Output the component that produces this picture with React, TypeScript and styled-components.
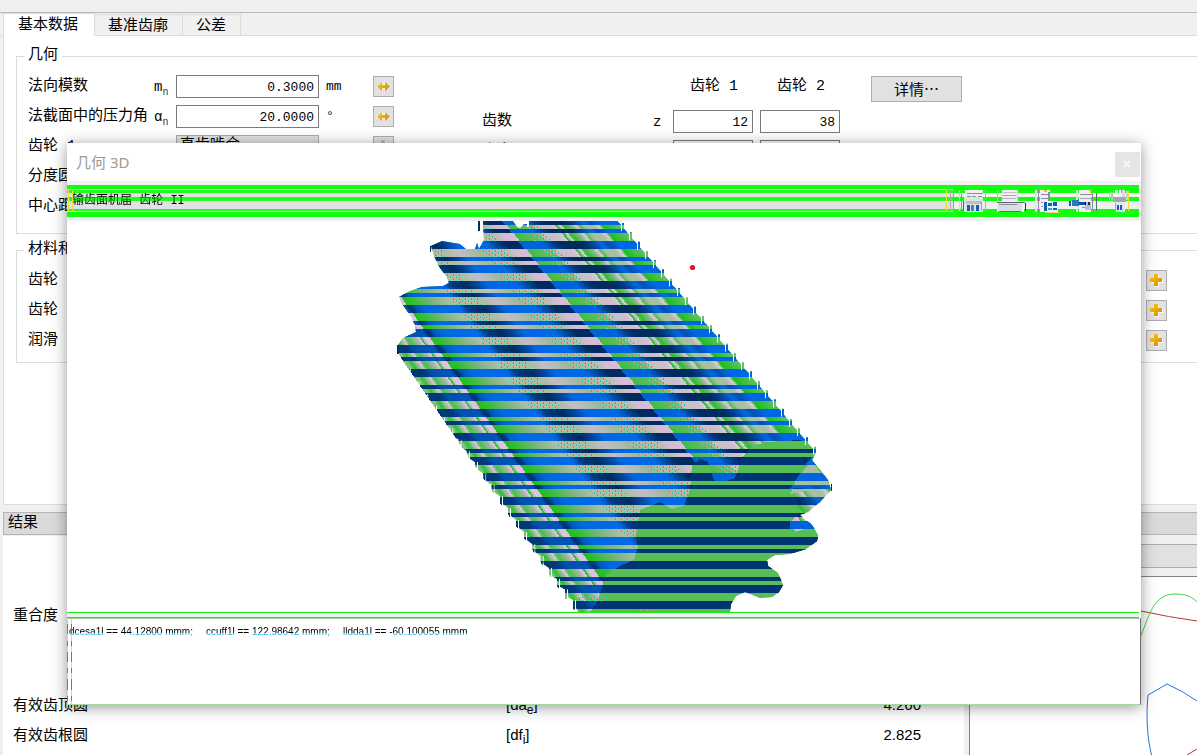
import React from "react";
import styled, { createGlobalStyle } from "styled-components";

const UI = `"Liberation Sans", "Noto Sans CJK SC", sans-serif`;
const MONO = `"Liberation Mono", "Noto Sans CJK SC", monospace`;

const GlobalStyle = createGlobalStyle`
  *, *::before, *::after { box-sizing: border-box; }
  html, body { margin: 0; padding: 0; height: 100%; overflow: hidden; }
  body { background: #f0f0f0; color: #000; font: 15px/20px ${MONO}; }
  #root { height: 100%; }
`;

/* ---------- main form ---------- */

const Desktop = styled.div`
  position: relative;
  min-height: 100vh;
  display: flex;
  flex-direction: column;
`;
const TopStrip = styled.header`
  height: 13px;
  border-bottom: 1px solid #b9b9b9;
`;
const TabBar = styled.nav`
  display: flex;
  align-items: flex-end;
  height: 23px;
  padding-left: 3px;
  border-bottom: 1px solid #dcdcdc;
`;
const Tab = styled.button<{ $active?: boolean }>`
  height: ${(p) => (p.$active ? 23 : 21)}px;
  margin: ${(p) => (p.$active ? "0 0 -1px" : "0")};
  padding: ${(p) => (p.$active ? "2px 16px 0 14px" : "2px 14px 0 13px")};
  border: 1px solid #dcdcdc;
  border-width: ${(p) => (p.$active ? "1px 1px 0 1px" : "1px 1px 0 0")};
  background: ${(p) => (p.$active ? "#fff" : "#f0f0f0")};
  color: #000;
  font: 15px/20px ${MONO};
`;
const Panel = styled.main`
  height: 469px;
  margin-left: 3px;
  padding: 10px 0 0 12px;
  background: #fff;
  border: 1px solid #dcdcdc;
  border-width: 0 0 1px 1px;
`;
const Group = styled.fieldset<{ $size: number }>`
  display: flex;
  height: ${(p) => p.$size}px;
  min-width: 0;
  margin: 0 0 6px;
  padding: 5px 0 0 11px;
  border: 1px solid #dcdcdc;
  border-right: 0;
`;
const Legend = styled.legend`
  margin-left: -4px;
  padding: 0 4px;
  line-height: 20px;
`;
const Column = styled.div`
  width: 454px;
  flex: none;
`;
const GearColumn = styled.div`
  flex: 1;
`;
const Row = styled.div`
  display: flex;
  align-items: center;
  height: 30px;
`;
const RowLabel = styled.label<{ $w: number }>`
  width: ${(p) => p.$w}px;
  flex: none;
  padding-top: 2px;
  white-space: nowrap;
`;
const Sym = styled.span<{ $w: number }>`
  width: ${(p) => p.$w}px;
  flex: none;
  padding-top: 2px;
  font-size: 14px;
  sub { font-size: 10px; line-height: 0; color: #245; }
`;
const Field = styled.input<{ $w: number }>`
  width: ${(p) => p.$w}px;
  height: 23px;
  flex: none;
  margin-right: 7px;
  padding: 2px 4px 0;
  border: 1px solid #7a7a7a;
  background: #fff;
  text-align: right;
  font: 13px/20px ${MONO};
`;
const Choice = styled.select`
  width: 143px;
  height: 23px;
  margin-right: 7px;
  padding: 0 3px;
  appearance: none;
  border: 1px solid #adadad;
  border-radius: 0;
  background: #e1e1e1;
  color: #000;
  font: 15px/20px ${MONO};
`;
const Unit = styled.span`
  width: 47px;
  padding-top: 2px;
  font-size: 13px;
`;
const IconButton = styled.button`
  display: flex;
  align-items: center;
  justify-content: center;
  width: 21px;
  height: 21px;
  padding: 0;
  border: 1px solid #adadad;
  background: #e1e1e1;
`;
const HeadRow = styled.div`
  display: flex;
  height: 35px;
  padding-left: 208px;
  line-height: 32px;
`;
const HeadCell = styled.span`
  width: 87px;
`;
const DetailButton = styled.button`
  width: 91px;
  height: 26px;
  margin: 5px 0 0 7px;
  padding: 0;
  border: 1px solid #adadad;
  background: #e1e1e1;
  font: 15px/20px "Noto Sans CJK SC", sans-serif;
`;
const MaterialRow = styled(Row)`
  justify-content: space-between;
  padding-right: 30px;
`;
const MaterialName = styled.span`
  padding-top: 2px;
`;
const MaterialRows = styled.div`
  flex: 1;
`;

/* ---------- results ---------- */

const Lower = styled.section`
  display: flex;
  flex: 1;
  padding: 7px 0 0 3px;
`;
const Results = styled.div`
  display: flex;
  flex-direction: column;
  flex: 1;
`;
const DockTitle = styled.h2`
  height: 23px;
  margin: 0 0 1px;
  padding-left: 4px;
  border: 1px solid #b4b4b4;
  border-right: 0;
  background: #dadada;
  font: 15px/22px ${MONO};
`;
const ResultBody = styled.div`
  flex: 1;
  padding: 64px 43px 0 10px;
  background: #fff;
`;
const ResultTable = styled.table`
  width: 100%;
  border-collapse: collapse;
  table-layout: fixed;
  font-family: ${UI};
  td, th { height: 30px; padding: 0; font-weight: 400; text-align: left; vertical-align: middle; }
  th { width: 493px; }
  tr:first-child > * { height: 90px; padding-bottom: 60px; }
  td:last-child { text-align: right; }
  sub { font-size: 12px; line-height: 0; }
`;
const ChartDock = styled.div`
  display: flex;
  flex-direction: column;
  width: 228px;
  margin-left: 5px;
`;
const ChartBar = styled.div`
  height: 24px;
  margin: 8px 0;
  border: 1px solid #adadad;
  border-right: 0;
  background: #e1e1e1;
`;
const ChartArea = styled.div`
  flex: 1;
  border: 1px solid #828282;
  border-width: 1px 0 0 1px;
  background: #fff;
  svg { display: block; }
`;

/* ---------- 3D window ---------- */

const Win = styled.section`
  position: absolute;
  top: 143px;
  left: 67px;
  right: 56px;
  background: #fff;
  box-shadow: 0 2px 14px rgba(0, 0, 0, 0.42);
`;
const TitleBar = styled.div`
  display: flex;
  align-items: center;
  justify-content: space-between;
  height: 38px;
  padding: 4px 1px 0 9px;
`;
const WinTitle = styled.h1`
  margin: 0;
  padding-bottom: 4px;
  color: #999;
  font: 15px/20px "Noto Sans", "Noto Sans CJK SC", sans-serif;
`;
const CloseButton = styled.button`
  display: flex;
  align-items: center;
  justify-content: center;
  width: 25px;
  height: 25px;
  padding: 0;
  border: 0;
  background: #e5e5e5;
`;
const Toolbar = styled.div`
  padding: 4px 2px 4px 0;
  background: #f0f0f0;
`;
const ToolStrip = styled.div`
  display: flex;
  height: 32px;
  background: linear-gradient(#10ff10 8px, #f0f0f0 8px 12px, #10ff10 12px 16px, #f0f0f0 16px 24px, #10ff10 24px);
`;
const ToolLabel = styled.div`
  position: relative;
  flex: 1;
  padding-left: 5px;
  border-right: 1px solid #a0b030;
  background: linear-gradient(
    #10ff10 4px, #c8ffc8 4px 5px, #20ff20 5px 8px, #e1e1e1 8px 12px, #20ff20 12px 16px,
    #e1e1e1 16px 24px, #20ff20 24px 26px, #c8ffc8 26px 27px, #10ff10 27px
  );
  font: 12px/32px ${MONO};
  white-space: pre;
  &::before {
    content: "";
    position: absolute;
    inset: 4px auto 5px 1px;
    width: 5px;
    border: 1px solid #e8e040;
  }
  &::after {
    content: "";
    position: absolute;
    inset: 4px 2px 5px auto;
    width: 5px;
    border: 1px solid #e8e040;
    border-right-color: #b0b0b0;
  }
`;
const ToolName = styled.span`
  background: linear-gradient(#000 12px, #0a6a0a 12px 16px, #000 16px);
  background-clip: text;
  color: transparent;
  display: inline-block;
  height: 32px;
`;
const ToolButton = styled.button`
  width: 37px;
  height: 32px;
  padding: 0;
  border: 0;
  background: none;
  svg { display: block; }
`;
const View = styled.div`
  height: 391px;
  overflow: hidden;
  svg { display: block; width: 100%; height: 391px; }
`;
const Splitter = styled.div`
  height: 6px;
  border: solid #14f014;
  border-width: 1px 0;
  background: #f0f0f0;
  margin-right: 2px;
`;
const Log = styled.output`
  display: flex;
  position: relative;
  gap: 9px;
  height: 87px;
  padding: 5px 0 0 1px;
  border: 1px solid #808080;
  border-color: #a0d0a0 #707070 #a0dca0 transparent;
  font: 10px/16px ${UI};
  white-space: pre;
  &::before {
    content: "";
    position: absolute;
    inset: 0 auto 0 -1px;
    width: 5px;
    border: 1px solid;
    border-width: 0 1px;
    border-image: repeating-linear-gradient(#a8dcff 0 6px, #777 6px 16px, #a8dcff 16px 22px, #777 22px 27px) 1;
  }
`;
const LogItem = styled.span`
  width: 128px;
  height: 16px;
  background: linear-gradient(#000 9px, #12b4f0 9px 11px, #28b428 11px 12px, #e8e020 12px);
  background-clip: text;
  color: transparent;
`;

/* ---------- drawings ---------- */

const Swap = () => (
  <svg width="15" height="13" viewBox="0 0 15 13" aria-hidden="true">
    <defs>
      <linearGradient id="amber" x1="0" y1="0" x2="1" y2="1">
        <stop offset="0" stopColor="#ffd21c" />
        <stop offset="1" stopColor="#d48300" />
      </linearGradient>
    </defs>
    <path d="M1 6.500 6 1.500v3.500h3V1.500L14 6.500 9 11.500V8H6v3.500z" fill="url(#amber)" stroke="#fff" strokeWidth="1" paintOrder="stroke" />
  </svg>
);
const Plus = ({ off }: { off?: boolean }) => (
  <svg width="15" height="15" viewBox="0 0 15 15" aria-hidden="true">
    <path d="M6 2h4v4h4v4h-4v4H6v-4H2V6h4z" fill="#fff" />
    <path d="M5 1h4v4h4v4H9v4H5V9H1V5h4z" fill={off ? "#bbb" : "url(#amber)"} />
  </svg>
);

type Px = [number, number, number, number, string];
const toolArt: Record<string, Px[]> = {
  计算器: [
    [5, 5, 1, 21, "#d8d8e0"], [7, 9, 1, 15, "#8a9098"], [31, 5, 1, 22, "#aab0b8"], [28, 5, 1, 20, "#e8e040"],
    [11, 5, 18, 7, "#f2ecf6"], [13, 8, 16, 1, "#8890a0"], [13, 11, 4, 1, "#8890a0"], [18, 11, 4, 1, "#8890a0"], [24, 11, 4, 1, "#8890a0"],
    [10, 12, 19, 3, "#c8f4c0"], [10, 15, 19, 12, "#dde2e8"], [12, 16, 15, 3, "#b8c0c8"], [13, 20, 3, 6, "#1060b0"],
    [17, 20, 3, 6, "#3888c8"], [22, 20, 3, 6, "#1060b0"], [27, 16, 1, 10, "#60c8e8"], [9, 16, 1, 10, "#606870"],
  ],
  打印: [
    [6, 5, 1, 11, "#60e8e8"], [11, 5, 16, 11, "#f2ecf6"], [12, 7, 14, 1, "#c0c0c8"], [11, 10, 14, 1, "#a8a8b0"], [11, 13, 14, 1, "#c0a8c8"],
    [26, 5, 1, 10, "#e8e040"], [6, 17, 28, 1, "#606870"], [6, 18, 27, 8, "#d8dee4"], [8, 19, 18, 1, "#889098"],
    [6, 18, 1, 9, "#f0f0f0"], [31, 18, 2, 9, "#f4f4f4"], [34, 18, 1, 8, "#303840"], [9, 26, 20, 1, "#20a020"],
  ],
  表格: [
    [7, 5, 2, 22, "#e4e4ea"], [10, 5, 1, 22, "#8890a0"], [12, 5, 10, 22, "#f2ecf6"], [13, 9, 7, 1, "#8890a0"], [13, 13, 7, 1, "#8890a0"],
    [13, 17, 7, 1, "#8890a0"], [13, 21, 7, 1, "#8890a0"], [16, 5, 3, 2, "#f0c020"], [20, 7, 2, 9, "#8890a0"], [15, 17, 15, 10, "#e8f4ff"],
    [16, 17, 3, 9, "#1060b0"], [20, 18, 4, 3, "#1060b0"], [25, 17, 4, 4, "#1060b0"], [20, 23, 4, 2, "#38a0e0"],
    [25, 23, 4, 2, "#1060b0"], [17, 27, 14, 1, "#f0d080"],
  ],
  导出: [
    [11, 5, 2, 22, "#e4e4ea"], [14, 5, 12, 22, "#f2ecf6"], [15, 9, 12, 1, "#8890a0"], [15, 13, 11, 1, "#a8a8b0"], [17, 22, 9, 1, "#8890a0"],
    [20, 17, 6, 8, "#b8c0c8"], [24, 5, 2, 3, "#e8e040"], [27, 8, 1, 18, "#888f98"], [31, 8, 1, 18, "#606870"],
    [4, 16, 2, 5, "#1060b0"], [7, 15, 7, 6, "#2878c0"], [14, 17, 6, 3, "#1050a0"], [20, 17, 1, 3, "#000"], [23, 17, 2, 3, "#203040"],
  ],
  设置: [
    [7, 8, 1, 9, "#a0e0e0"], [9, 7, 2, 8, "#b8c0c8"], [13, 5, 3, 9, "#f4f4fa"], [17, 5, 2, 9, "#f4f4fa"], [20, 5, 3, 9, "#d8d8e4"],
    [24, 6, 2, 9, "#c8d8c8"], [26, 6, 1, 20, "#e8e040"], [11, 12, 13, 5, "#a0a8b0"], [13, 17, 10, 10, "#e4e8ee"],
    [15, 20, 2, 5, "#1060b0"], [18, 20, 2, 5, "#1060b0"], [13, 18, 1, 9, "#60c8e8"], [20, 25, 1, 3, "#60e8e8"],
  ],
};
const ToolIcon = ({ name }: { name: string }) => (
  <svg width="37" height="32" viewBox="0 0 37 32" shapeRendering="crispEdges" aria-hidden="true">
    {toolArt[name].map(([x, y, w, h, c], i) => (
      <rect key={i} x={x} y={y} width={w} height={h} fill={c} />
    ))}
  </svg>
);

/* Flank shading: colour stops taken across the gear body at y = 301. */
type Stop = [number, string];
const lightStops: Stop[] = [
  [365, "#80c080"], [369, "#30c030"], [377, "#dcc0dc"], [380, "#40c040"], [389, "#a0b8a0"], [393, "#dcc0e0"], [395, "#38c038"],
  [398, "#e0c8e4"], [403, "#dcc0e0"], [405, "#20c020"], [412, "#30bf30"], [433, "#80b480"], [450, "#a8bfa5"], [482, "#a8bfa5"],
  [496, "#c6bcc4"], [506, "#b4bcb4"], [518, "#9cb89c"], [548, "#b8bfb4"], [555, "#d4bcd4"], [568, "#d8bcd8"], [569, "#40be40"],
  [582, "#58be58"], [594, "#78bf70"], [597, "#c6c0c6"], [612, "#cbbfcb"], [617, "#dcc4e0"], [619, "#30c030"], [623, "#e0c8e4"],
  [626, "#20c020"], [636, "#90b890"], [640, "#e8c8ec"], [643, "#58be50"], [648, "#a8bfa0"], [658, "#a8bfa0"], [664, "#e4c8e4"],
  [666, "#18c018"], [676, "#40c040"], [692, "#7cbc78"],
];
const blueStops: Stop[] = [
  [365, "#003878"], [374, "#003878"], [382, "#0050b0"], [402, "#0054b8"], [404, "#002f68"], [408, "#003878"], [411, "#0054b8"],
  [420, "#0068e0"], [454, "#006aea"], [463, "#003c80"], [478, "#002b60"], [490, "#0048a0"], [500, "#0068e6"], [530, "#0068e6"],
  [540, "#00489c"], [550, "#002b60"], [566, "#002b60"], [567, "#0060d8"], [590, "#0064e0"], [600, "#003c88"], [608, "#002b60"],
  [630, "#002b60"], [642, "#0048a0"], [650, "#0068e6"], [657, "#0050b0"], [668, "#0068e6"], [695, "#0064dc"],
];
const ROW = 301;
const xAt = (t: number, y: number) => {
  const f = (y - 221) / 391;
  return 310 + 307 * t + f * (268 + 72 * t);
};
const tOf = (x: number) => (x - xAt(0, ROW)) / (xAt(1, ROW) - xAt(0, ROW));
const channel = (c: string, i: number) => parseInt(c.slice(1 + i * 2, 3 + i * 2), 16);
const colourAt = (stops: Stop[], x: number) => {
  let k = 0;
  while (k < stops.length - 2 && stops[k + 1][0] < x) k++;
  const [x0, a] = stops[k];
  const [x1, b] = stops[k + 1];
  const f = Math.max(0, Math.min(1, (x - x0) / (x1 - x0)));
  return `rgb(${[0, 1, 2].map((i) => Math.round(channel(a, i) + f * (channel(b, i) - channel(a, i)))).join(",")})`;
};
const strip = (x0: number, x1: number) => {
  const a = tOf(x0);
  const b = tOf(x1);
  return `${xAt(a, 221)},221 ${xAt(b, 221)},221 ${xAt(b, 612)},612 ${xAt(a, 612)},612`;
};
const Flanks = ({ stops }: { stops: Stop[] }) => (
  <g shapeRendering="crispEdges">
    {Array.from({ length: 172 }, (_, i) => 362 + i * 2).map((x) => (
      <polygon key={x} points={strip(x, x + 3)} fill={colourAt(stops, x + 1)} />
    ))}
  </g>
);
/* Edges broken into 8px columns, each ending in a narrow spike. */
const serrate = (pts: [number, number][], dir: 1 | -1) =>
  pts.slice(1).flatMap(([x1, y1], i) => {
    const [x0, y0] = pts[i];
    const n = Math.max(1, Math.round(Math.abs(x1 - x0) / 8));
    const out: string[] = [];
    for (let k = 1; k <= n; k++) {
      const x = x0 + ((x1 - x0) * k) / n;
      const y = y0 + ((y1 - y0) * k) / n;
      out.push(`${x - 3},${y - 4}`, `${x - 3},${y + 6 * dir}`, `${x - 1},${y + 6 * dir}`, `${x - 1},${y - 4}`, `${x},${y - 4}`, `${x},${y + 4 * dir}`);
    }
    return out;
  });
const outline = [
  "617,221 529,221 529,227 527,227 527,224 524,224 520,228 517,227 513,221 483,221 484,240 479,249 477,243 475,249 466,249 460,244 442,241 431,246 434,256 440,268 447,277 449,283 443,286 422,287 410,291 399,297 402,304 410,315 415,325 416,332 403,338 398,345 398,352 402,360",
  ...serrate([[402, 360], [437, 410], [478, 466], [503, 500], [527, 536], [552, 572], [576, 604]], 1),
  "578,612 730,612 731,604 736,596 745,592 753,595 760,598 772,597 779,592 783,585 778,573 768,566 767,560 775,555 790,554 806,549 817,541 818,535 812,525 800,515 808,512 820,502 831,490 828,480 820,470 812,460 816,452",
  ...[...Array(25)].flatMap((_, i) => {
    const x = 816 - i * 8;
    const y = x > 785 ? 417 + (x - 785) * 1.15 : 221 + (x - 617) * 1.16;
    return [`${x},${y}`, `${x},${y - 6}`, `${x - 2},${y - 6}`, `${x - 2},${y + 2}`, `${x - 3},${y + 2}`, `${x - 3},${y - 4}`];
  }),
].join(" ");
const face =
  "590,612 598,600 606,575 620,566 634,560 638,548 636,535 640,510 660,502 672,509 684,506 690,490 692,465 700,459 708,462 714,480 722,483 735,478 742,458 752,446 768,442 800,440 814,450 806,470 794,490 800,512 790,522 796,532 812,526 840,530 840,612";
const bands: [number, number][] = [[0, 8], [16, 8], [28, 4], [40, 8], [56, 4]];
const blueRows = Array.from({ length: 7 }, (_, i) => 201 + i * 64).flatMap((y) => bands.map(([o, h]) => [y + o, h]));
const speckles: [number, number][] = [[452, 480], [520, 546], [584, 600]];

const Gear = () => (
  <svg viewBox="67 221 1074 391" role="img" aria-label="3D">
    <defs>
      <clipPath id="body"><polygon points={outline} /></clipPath>
      <clipPath id="rows">
        {blueRows.map(([y, h]) => <rect key={y} x="380" y={y} width="470" height={h} />)}
      </clipPath>
      <pattern id="dither" width="6" height="4" patternUnits="userSpaceOnUse">
        <rect x="0" y="0" width="1" height="2" fill="#20c8b0" />
        <rect x="1" y="0" width="1" height="1" fill="#e8c060" />
        <rect x="3" y="2" width="1" height="2" fill="#30c060" />
        <rect x="4" y="2" width="1" height="1" fill="#f0b090" />
      </pattern>
    </defs>
    <g clipPath="url(#body)" shapeRendering="crispEdges">
      <Flanks stops={lightStops} />
      {speckles.map(([a, b]) => <polygon key={a} points={strip(a, b)} fill="url(#dither)" />)}
      <polygon points={face} fill="#55be55" />
      <path d="M797 478 812 461 831 486 790 494z" fill="#a8bfa0" />
      <path d="M577 596h30v5h-30zM636 612v-4h20v4z" fill="url(#dither)" />
      <g clipPath="url(#rows)">
        <Flanks stops={blueStops} />
        <polygon points={face} fill="#003474" />
        <path d="M797 478 808 461 831 484 790 489zM790 521h22l4 8h-26z" fill="#0064dc" />
      </g>
    </g>
    <g fill="#002f68" shapeRendering="crispEdges">
      <path d="M478 221h2v10h-2zM430 246h1v6h-1zM397 345h2v9h-2zM831 484h1v7h-1z" />
    </g>
    <circle cx="692.500" cy="267.500" r="2.600" fill="#e0141c" />
  </svg>
);

const Chart = () => (
  <svg width="227" height="178" viewBox="970 577 227 178" fill="none" aria-hidden="true">
    <path d="M1130 609 1141 611Q1168 617 1197 621M1187 755 1197 749" stroke="#b23a3a" />
    <path d="M1139 640C1149 618 1152 594 1175 594 1186 594 1192 597 1197 602" stroke="#46d846" />
    <path d="M1152 757C1147 738 1146 716 1148 695L1167 684Q1183 691 1197 701" stroke="#2b74d8" />
  </svg>
);

export default function App() {
  return (
    <Desktop>
      <GlobalStyle />
      <TopStrip />
      <TabBar>
        <Tab $active>基本数据</Tab>
        <Tab>基准齿廓</Tab>
        <Tab>公差</Tab>
      </TabBar>
      <Panel>
        <Group $size={188}>
          <Legend>几何</Legend>
          <Column>
            <Row>
              <RowLabel $w={126} htmlFor="mn">法向模数</RowLabel>
              <Sym $w={22}>m<sub>n</sub></Sym>
              <Field id="mn" $w={143} defaultValue="0.3000" />
              <Unit>mm</Unit>
              <IconButton aria-label="换算"><Swap /></IconButton>
            </Row>
            <Row>
              <RowLabel $w={126} htmlFor="an">法截面中的压力角</RowLabel>
              <Sym $w={22}>α<sub>n</sub></Sym>
              <Field id="an" $w={143} defaultValue="20.0000" />
              <Unit>°</Unit>
              <IconButton aria-label="换算"><Swap /></IconButton>
            </Row>
            <Row>
              <RowLabel $w={148} htmlFor="kind">齿轮 1</RowLabel>
              <Choice id="kind"><option>直齿啮合</option></Choice>
              <Unit />
              <IconButton aria-label="添加" disabled><Plus off /></IconButton>
            </Row>
            <Row><RowLabel as="span" $w={148}>分度圆</RowLabel></Row>
            <Row><RowLabel as="span" $w={148}>中心距</RowLabel></Row>
          </Column>
          <GearColumn>
            <HeadRow>
              <HeadCell>齿轮 1</HeadCell>
              <HeadCell>齿轮 2</HeadCell>
              <DetailButton>详情…</DetailButton>
            </HeadRow>
            <Row>
              <RowLabel $w={171} htmlFor="z1">齿数</RowLabel>
              <Sym $w={20}>z</Sym>
              <Field id="z1" $w={80} defaultValue="12" />
              <Field $w={80} defaultValue="38" aria-label="齿数 2" />
            </Row>
            <Row>
              <RowLabel $w={191} htmlFor="b1">齿宽</RowLabel>
              <Field id="b1" $w={80} />
              <Field $w={80} aria-label="齿宽 2" />
            </Row>
          </GearColumn>
        </Group>
        <Group $size={123}>
          <Legend>材料和润滑</Legend>
          <MaterialRows>
            {["齿轮 1", "齿轮 2", "润滑"].map((n) => (
              <MaterialRow key={n}>
                <MaterialName>{n}</MaterialName>
                <IconButton aria-label={n}><Plus /></IconButton>
              </MaterialRow>
            ))}
          </MaterialRows>
        </Group>
      </Panel>
      <Lower>
        <Results>
          <DockTitle>结果</DockTitle>
          <ResultBody>
            <ResultTable>
              <tbody>
                <tr><th scope="row">重合度</th><td /><td /></tr>
                <tr><th scope="row">有效齿顶圆</th><td>[da<sub>e</sub>]</td><td>4.260</td></tr>
                <tr><th scope="row">有效齿根圆</th><td>[df<sub>i</sub>]</td><td>2.825</td></tr>
              </tbody>
            </ResultTable>
          </ResultBody>
        </Results>
        <ChartDock>
          <DockTitle />
          <ChartBar />
          <ChartArea><Chart /></ChartArea>
        </ChartDock>
      </Lower>

      <Win>
        <TitleBar>
          <WinTitle>几何 3D</WinTitle>
          <CloseButton aria-label="关闭">
            <svg width="9" height="9" viewBox="0 0 9 9"><path d="M1 1l6 6M7 1 1 7" stroke="#f8f8f8" strokeWidth="2" /></svg>
          </CloseButton>
        </TitleBar>
        <Toolbar>
          <ToolStrip>
            <ToolLabel><ToolName>输齿面机届 齿轮 II</ToolName></ToolLabel>
            {Object.keys(toolArt).map((n) => (
              <ToolButton key={n} aria-label={n}><ToolIcon name={n} /></ToolButton>
            ))}
          </ToolStrip>
        </Toolbar>
        <View><Gear /></View>
        <Splitter />
        <Log>
          <LogItem>dcesa1l == 44.12800 mmm;</LogItem>
          <LogItem>ccuff1l == 122.98642 mmm;</LogItem>
          <LogItem>lldda1l == -60.100055 mmm</LogItem>
        </Log>
      </Win>
    </Desktop>
  );
}
